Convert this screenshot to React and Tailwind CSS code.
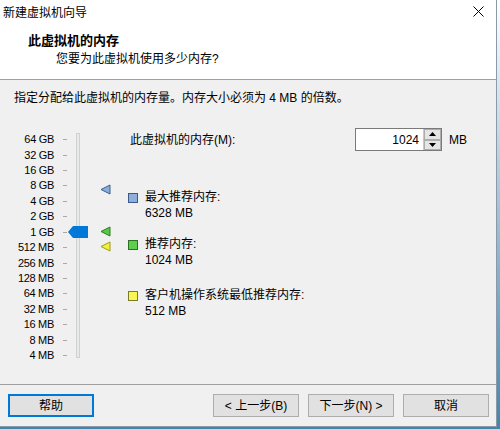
import React from "react";

const labels = ["64 GB","32 GB","16 GB","8 GB","4 GB","2 GB","1 GB","512 MB","256 MB","128 MB","64 MB","32 MB","16 MB","8 MB","4 MB"];

function Tri({ fill, stroke, top }) {
  return (
    <svg className="absolute left-[100px]" style={{ top }} width="11" height="11" viewBox="0 0 11 11">
      <polygon points="1,5.5 10,1 10,10" fill={fill} stroke={stroke} strokeWidth="1" />
    </svg>
  );
}

function Item({ color, border, title, value, className }) {
  return (
    <div className={"flex " + className}>
      <div className={"mt-[3px] w-[10px] h-[10px] border " + border + " " + color}></div>
      <div className="ml-[7px] leading-[15.5px]">
        <div>{title}</div>
        <div>{value}</div>
      </div>
    </div>
  );
}

export default function App() {
  return (
    <div
      className="w-[500px] h-[429px] bg-gradient-to-b from-[#ffffff] to-[#3f86ad] overflow-hidden text-[12px] text-black"
      style={{ fontFamily: '"Liberation Sans", "Noto Sans CJK SC", sans-serif' }}
    >
      <div className="w-[497px] h-[427px] bg-[#f0f0f0] border-r border-b border-[#8a9aa8] flex flex-col">
        {/* title bar */}
        <div className="h-[30px] bg-white flex items-center justify-between pl-[3px] pr-[12px]">
          <span className="-mt-[4px]">新建虚拟机向导</span>
          <svg width="11" height="11" viewBox="0 0 11 11" className="-mt-[8px]">
            <path d="M0.5 0.5 L10.5 10.5 M10.5 0.5 L0.5 10.5" stroke="#000" strokeWidth="1" />
          </svg>
        </div>
        {/* header */}
        <div className="h-[50px] bg-white border-b border-[#a0a0a0] flex flex-col">
          <div className="pl-[28px] mt-[2px] font-bold text-[13px] leading-[18px]">此虚拟机的内存</div>
          <div className="pl-[56px] leading-[18px]">您要为此虚拟机使用多少内存?</div>
        </div>
        {/* body */}
        <div className="flex-1 flex flex-col">
          <div className="pl-[14px] mt-[10px] leading-[16px]">指定分配给此虚拟机的内存量。内存大小必须为 4 MB 的倍数。</div>
          <div className="flex mt-[22px]">
            {/* slider */}
            <div className="relative w-[128px] h-[232px] mt-[4px]">
              <div className="flex flex-col">
                {labels.map((l) => (
                  <div key={l} className="h-[15.43px] flex items-center">
                    <span className="w-[54px] text-right text-[11px] leading-[13px] tracking-[-0.3px]">{l}</span>
                    <span className="ml-[9px] w-[4px] h-[1px] bg-[#a8a8a8]"></span>
                  </div>
                ))}
              </div>
              <div className="absolute left-[76px] top-[1px] w-[4px] h-[225px] bg-[#e7eaea] border border-[#d0d0d0]"></div>
              <svg className="absolute left-[68px] top-[94px]" width="20" height="12" viewBox="0 0 20 12">
                <polygon points="0,6 5,0 20,0 20,12 5,12" fill="#0078d7" />
              </svg>
              <Tri fill="#8aaed6" stroke="#3d5f8f" top={52} />
              <Tri fill="#58c84a" stroke="#2a7a20" top={94} />
              <Tri fill="#f2f23a" stroke="#9a9a20" top={109} />
            </div>
            {/* right side */}
            <div className="flex flex-col">
              <div className="flex items-center h-[23px]">
                <span className="ml-[2px] w-[225px]">此虚拟机的内存(M):</span>
                <div className="flex h-[23px] border border-[#7a7a7a] bg-white w-[87px]">
                  <div className="flex-1 flex items-center justify-end pr-[4px]">1024</div>
                  <div className="w-[18px] flex flex-col bg-[#f0f0f0] border-l border-[#c8c8c8]">
                    <div className="flex-1 flex items-center justify-center border border-[#adadad] bg-[#e5e5e5]">
                      <svg width="7" height="4" viewBox="0 0 7 4"><polygon points="3.5,0 7,4 0,4" fill="#000" /></svg>
                    </div>
                    <div className="flex-1 flex items-center justify-center border border-[#adadad] bg-[#e5e5e5]">
                      <svg width="7" height="4" viewBox="0 0 7 4"><polygon points="0,0 7,0 3.5,4" fill="#000" /></svg>
                    </div>
                  </div>
                </div>
                <span className="ml-[7px]">MB</span>
              </div>
              <Item className="mt-[39px]" color="bg-[#8eaedb]" border="border-[#3b5a86]" title="最大推荐内存:" value="6328 MB" />
              <Item className="mt-[16px]" color="bg-[#5cd04e]" border="border-[#2b6f22]" title="推荐内存:" value="1024 MB" />
              <Item className="mt-[20px]" color="bg-[#f7f752]" border="border-[#7a7a2a]" title="客户机操作系统最低推荐内存:" value="512 MB" />
            </div>
          </div>
        </div>
        {/* footer */}
        <div className="h-[42px] border-t border-[#a0a0a0] flex items-start pt-[9px] pl-[8px]">
          <button className="w-[86px] h-[23px] border-2 border-[#0078d7] bg-[#e1e1e1] flex items-center justify-center">帮助</button>
          <button className="ml-[119px] w-[86px] h-[23px] border border-[#adadad] bg-[#e1e1e1] flex items-center justify-center">&lt; 上一步(B)</button>
          <button className="ml-[9px] w-[86px] h-[23px] border border-[#adadad] bg-[#e1e1e1] flex items-center justify-center">下一步(N) &gt;</button>
          <button className="ml-[9px] w-[86px] h-[23px] border border-[#adadad] bg-[#e1e1e1] flex items-center justify-center">取消</button>
        </div>
      </div>
    </div>
  );
}
